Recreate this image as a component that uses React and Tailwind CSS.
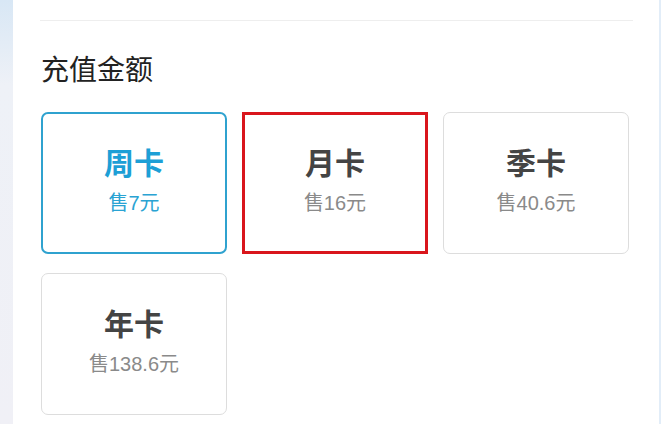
import { useState } from "react";

const plans = [
  { id: "week", name: "周卡", price: "售7元" },
  { id: "month", name: "月卡", price: "售16元" },
  { id: "season", name: "季卡", price: "售40.6元" },
  { id: "year", name: "年卡", price: "售138.6元" },
];

export default function App() {
  const [selected, setSelected] = useState("week");

  return (
    <div
      className="flex h-[424px] w-[661px] overflow-hidden bg-white"
      style={{ fontFamily: '"Noto Sans", "Noto Sans CJK SC", sans-serif' }}
    >
      <div className="w-[13px] shrink-0 bg-gradient-to-b from-[#d8e7f5] via-[#eef1f7] via-[20%] to-[#f0f0f6]" />

      <main className="flex-1 pt-[20px] pl-[27px] pr-[26px]">
        <div className="h-px w-[593px] bg-[#eeeeee]" />

        <h2 className="mt-[30px] pl-[1px] text-[28px] leading-[36px] text-[#222222]">充值金额</h2>

        <ul className="mt-[25px] grid grid-cols-[186px_186px_186px] gap-x-[15px] gap-y-[19px] pl-px">
          {plans.map((plan) => {
            const active = selected === plan.id;
            const marked = plan.id === "month";
            return (
              <li key={plan.id}>
                <button
                  type="button"
                  onClick={() => setSelected(plan.id)}
                  className={
                    "flex h-[142px] w-full flex-col items-center justify-center pb-[6px] " +
                    (marked
                      ? "w-[187px] border-[3px] border-[#d9161c]"
                      : active
                      ? "rounded-[7px] border-2 border-[#2fa2cf]"
                      : "rounded-[7px] border-[1.5px] border-[#dddddd]")
                  }
                >
                  <span
                    className={
                      "text-[30px] font-bold leading-[36px] " +
                      (active ? "text-[#1d9fd6]" : "text-[#444444]")
                    }
                  >
                    {plan.name}
                  </span>
                  <span
                    className={
                      "mt-[10px] text-[20px] leading-[24px] " +
                      (active ? "text-[#2aa3d3]" : "text-[#8a8a8a]")
                    }
                    style={{ fontFamily: '"Liberation Sans", "Noto Sans CJK SC", sans-serif' }}
                  >
                    {plan.price}
                  </span>
                </button>
              </li>
            );
          })}
        </ul>
      </main>

      <div className="w-[2px] shrink-0 bg-[#e2edf8]" />
    </div>
  );
}
